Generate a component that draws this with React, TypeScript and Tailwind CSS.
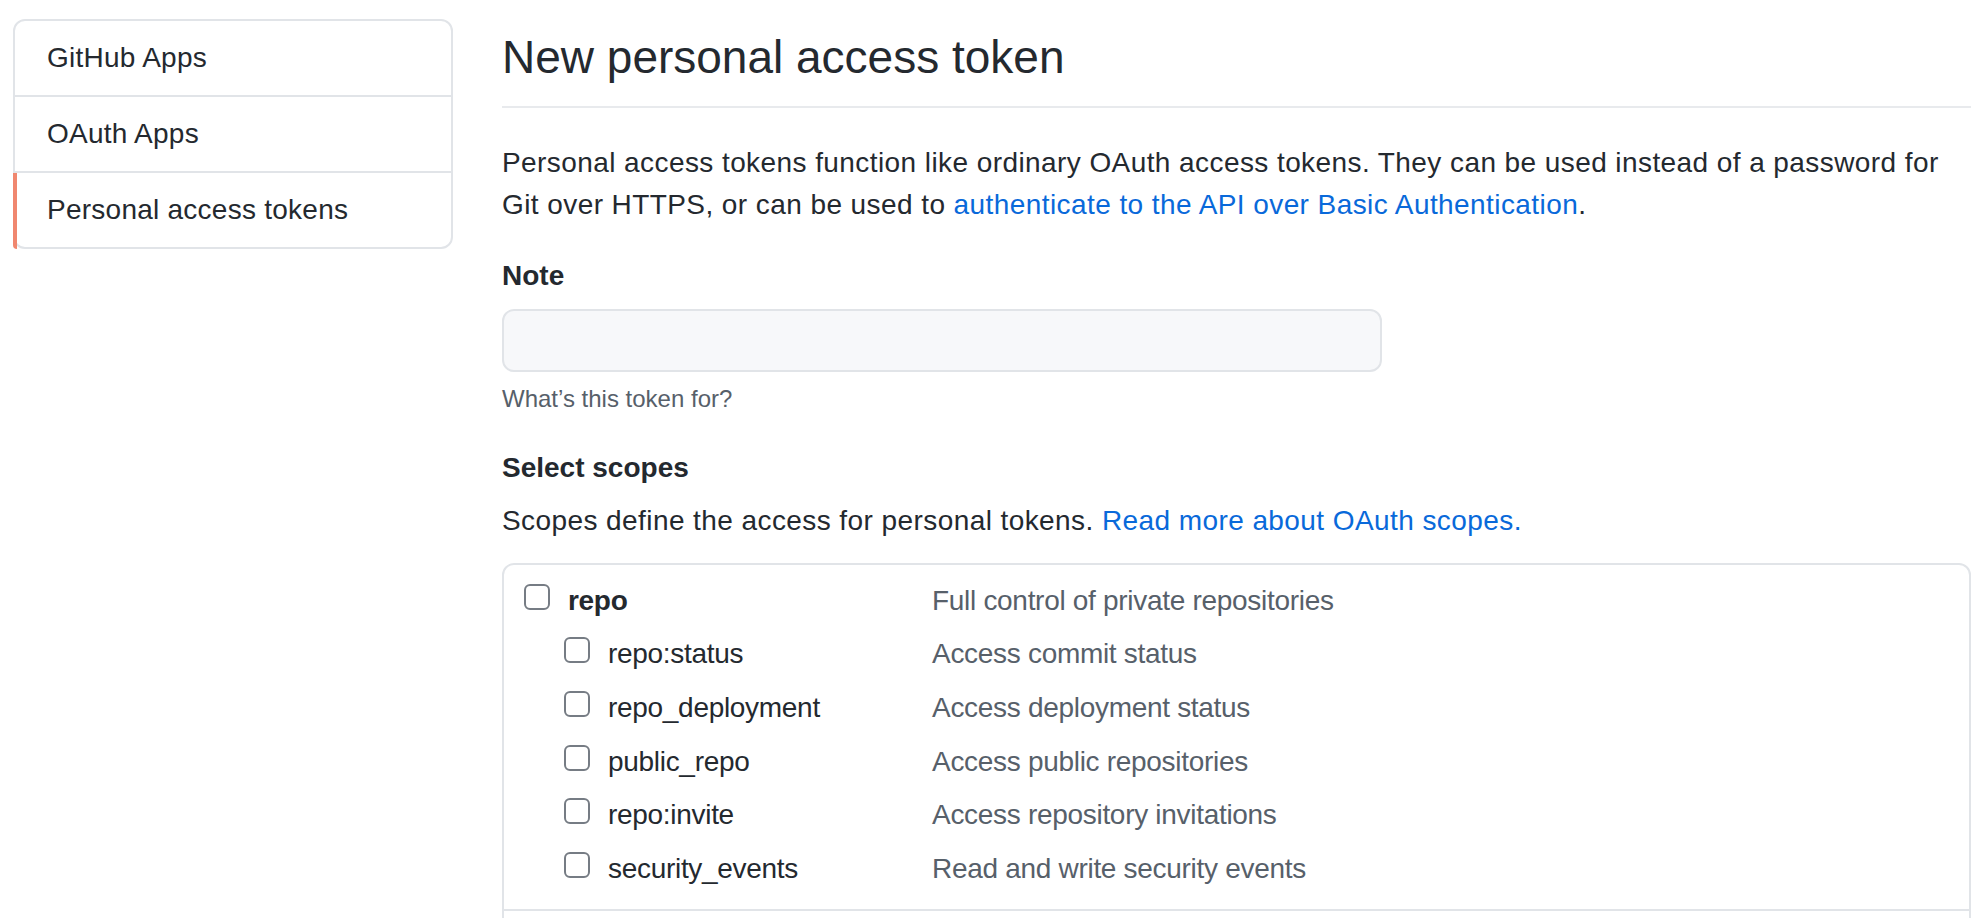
import React from 'react';

const scopes = [
  { name: 'repo:status', desc: 'Access commit status' },
  { name: 'repo_deployment', desc: 'Access deployment status' },
  { name: 'public_repo', desc: 'Access public repositories' },
  { name: 'repo:invite', desc: 'Access repository invitations' },
  { name: 'security_events', desc: 'Read and write security events' },
];

function Checkbox() {
  return (
    <span className="mb-[8px] inline-block h-[26px] w-[26px] shrink-0 rounded-[6px] border-2 border-[#767c84] bg-white" />
  );
}

function ScopeRow({ name, desc, parent }: { name: string; desc: string; parent?: boolean }) {
  return (
    <div className="flex h-[53.6px] items-center tracking-[-0.3px]">
      <div className={`flex w-[408px] shrink-0 items-center gap-[18px] ${parent ? '' : 'pl-[40px]'}`}>
        <Checkbox />
        <span className={parent ? 'font-bold text-[#24292f]' : 'text-[#24292f]'}>{name}</span>
      </div>
      <span className="text-[#57606a]">{desc}</span>
    </div>
  );
}

export default function App() {
  return (
    <div className="h-[918px] overflow-hidden bg-white font-['Liberation_Sans',Arial,sans-serif] text-[28px] leading-[42px] text-[#24292f]">
      <div className="flex gap-[49px] pl-[13px] pr-[11px] pt-[19px]">
        {/* settings sidebar */}
        <nav className="w-[440px] shrink-0 self-start rounded-xl border-2 border-[#e1e4e8]">
          <div className="px-[32px] py-[16px] tracking-[0.25px]">GitHub Apps</div>
          <div className="border-t-2 border-[#e1e4e8] px-[32px] py-[16px] tracking-[0.25px]">OAuth Apps</div>
          <div className="relative border-t-2 border-[#e1e4e8] px-[32px] py-[16px] tracking-[0.25px]">
            <span className="absolute -bottom-[2px] -left-[2px] top-0 w-[4px] rounded-bl-xl bg-[#f0876f]" />
            Personal access tokens
          </div>
        </nav>

        <main className="min-w-0 flex-1 pt-[8px]">
          <h1 className="border-b-2 border-[#e8eaed] pb-[19px] text-[46px] font-normal leading-[60px]">
            New personal access token
          </h1>

          <p className="mt-[34px] tracking-[0.42px]">
            Personal access tokens function like ordinary OAuth access tokens. They can be used instead of a password for
            <br />
            Git over HTTPS, or can be used to{' '}
            <a className="text-[#0969da]">authenticate to the API over Basic Authentication</a>.
          </p>

          <label className="mt-[29px] block font-bold">Note</label>
          <input
            type="text"
            className="mt-[12px] block h-[63px] w-[880px] rounded-xl border-2 border-[#e1e4e8] bg-[#f7f8fa] px-[16px] outline-none"
          />
          <p className="mt-[9px] text-[24px] leading-[36px] text-[#57606a]">What’s this token for?</p>

          <h3 className="mt-[30px] font-bold">Select scopes</h3>
          <p className="mt-[11px] tracking-[0.42px]">
            Scopes define the access for personal tokens.{' '}
            <a className="text-[#0969da]">Read more about OAuth scopes.</a>
          </p>

          <div className="mt-[21px] rounded-xl border-2 border-[#e1e4e8]">
            <div className="border-b-2 border-[#e1e4e8] pb-[13px] pl-[20px] pt-[9px]">
              <ScopeRow name="repo" desc="Full control of private repositories" parent />
              {scopes.map((s) => (
                <ScopeRow key={s.name} name={s.name} desc={s.desc} />
              ))}
            </div>
            <div className="h-[60px]" />
          </div>
        </main>
      </div>
    </div>
  );
}
